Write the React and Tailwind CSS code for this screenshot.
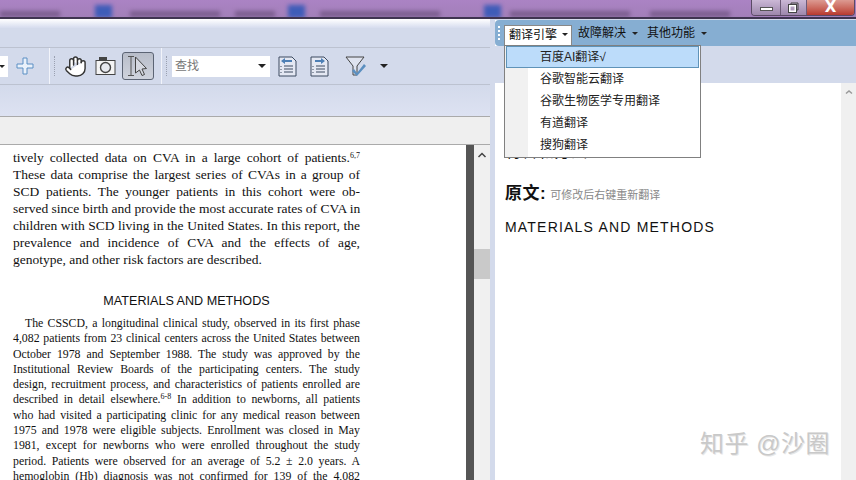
import React from 'react';
import { Hand } from 'lucide-react';

const cjk = "font-['Liberation_Sans','Noto_Sans_CJK_SC',sans-serif]";
const serif = "font-['Liberation_Serif','Times_New_Roman',serif]";

const introLines = [
  ['tively collected data on CVA in a large cohort of patients.', '6,7'],
  ['These data comprise the largest series of CVAs in a group of'],
  ['SCD patients. The younger patients in this cohort were ob-'],
  ['served since birth and provide the most accurate rates of CVA in'],
  ['children with SCD living in the United States. In this report, the'],
  ['prevalence and incidence of CVA and the effects of age,'],
];

const methodLines = [
  ['4,082 patients from 23 clinical centers across the United States between'],
  ['October 1978 and September 1988. The study was approved by the'],
  ['Institutional Review Boards of the participating centers. The study'],
  ['design, recruitment process, and characteristics of patients enrolled are'],
  ['described in detail elsewhere.', '6-8', ' In addition to newborns, all patients'],
  ['who had visited a participating clinic for any medical reason between'],
  ['1975 and 1978 were eligible subjects. Enrollment was closed in May'],
  ['1981, except for newborns who were enrolled throughout the study'],
  ['period. Patients were observed for an average of 5.2 ± 2.0 years. A'],
  ['hemoglobin (Hb) diagnosis was not confirmed for 139 of the 4,082'],
];

const engines = ['百度AI翻译√', '谷歌智能云翻译', '谷歌生物医学专用翻译', '有道翻译', '搜狗翻译'];

const titlePatches = [
  'left-[0px] w-[60px]', 'left-[130px] w-[90px]', 'left-[235px] w-[40px]',
  'left-[320px] w-[120px]', 'left-[510px] w-[120px]', 'left-[650px] w-[80px]',
];

const Caret = ({ className = '' }) => (
  <span className={`inline-block w-0 h-0 border-x-[3px] border-x-transparent border-t-[3px] border-t-[#222] ${className}`} />
);

const Gripper = () => (
  <div className="w-[2px] h-[20px] border-l border-dotted border-[#9aa0b0]" />
);

const CameraIcon = () => (
  <svg width="22" height="20" viewBox="0 0 22 20" fill="none">
    <rect x="4" y="1" width="8" height="4" fill="#444" />
    <rect x="1" y="4.500" width="19" height="14" fill="#f4f4f4" stroke="#444" />
    <circle cx="10.500" cy="11.500" r="5" fill="#e6e8ee" stroke="#444" strokeWidth="1.400" />
  </svg>
);

const SelectIcon = () => (
  <svg width="24" height="24" viewBox="0 0 24 24" fill="none">
    <path d="M2 2.500h6M2 21.500h6M5 2.500v19" stroke="#555" strokeWidth="1" />
    <path d="M9.500 3l11 11.500-4.500.5 2.500 5.500-2.500 1-2.500-5.500-4 3z" fill="#d5d8e0" stroke="#444" strokeWidth="1" />
  </svg>
);

const PlusIcon = () => (
  <svg width="18" height="18" viewBox="0 0 18 18" fill="#eaf1fa">
    <path d="M7 1h4v6h6v4h-6v6H7v-6H1V7h6z" stroke="#5b8fc4" strokeWidth="1" />
  </svg>
);

const PageIcon = ({ dir }) => (
  <svg width="19" height="21" viewBox="0 0 19 21" fill="none">
    <path d="M1 1h13l4 4v15H1z" fill="#e4e8f3" stroke="#3c4a60" />
    <path d="M6 10h9M6 13h9M6 16h9" stroke="#3c4a60" />
    <path d="M3 10v1M3 13v1M3 16v1" stroke="#3c4a60" />
    {dir === 'left'
      ? <path d="M3 5l4-3v2h7v2H7v2z" fill="#4d7fb5" />
      : <path d="M15 5l-4-3v2H5v2h6v2z" fill="#4d7fb5" />}
  </svg>
);

const FilterIcon = () => (
  <svg width="22" height="21" viewBox="0 0 22 21" fill="none">
    <path d="M1 1h18l-7 9v9h-4v-9z" fill="#dfe3ef" stroke="#444" />
    <path d="M9 13l3 4 7-9 2 2-9 10-5-5z" fill="#5b8fc0" />
  </svg>
);

const RestoreIcon = () => (
  <svg width="11" height="11" viewBox="0 0 11 11" fill="none">
    <path d="M3 3V1h7v7H8" stroke="#444" />
    <rect x="1.500" y="3.500" width="6" height="6" stroke="#fff" strokeWidth="2" />
    <rect x="0.500" y="2.500" width="8" height="8" stroke="#444" />
  </svg>
);

const WindowControls = () => (
  <div className="absolute top-0 right-[1px] flex h-[16px] w-[104px] rounded-b-[4px] border border-t-0 border-[#5b4a66] overflow-hidden">
    <div className="w-[29px] flex items-center justify-center bg-gradient-to-b from-[#cbb8d6] to-[#9d87ac] border-r border-[#6d5a78]">
      <div className="w-[13px] h-[4px] mt-[3px] bg-white border border-[#555]" />
    </div>
    <div className="w-[26px] flex items-center justify-center bg-gradient-to-b from-[#cbb8d6] to-[#9d87ac] border-r border-[#6d5a78]">
      <RestoreIcon />
    </div>
    <div className="flex-1 flex items-center justify-center bg-gradient-to-b from-[#dc9a92] to-[#b8382e]">
      <span className="text-white font-bold text-[15px] leading-none font-['DejaVu_Sans',sans-serif]">X</span>
    </div>
  </div>
);

const TitleBlur = () => (
  <div className="absolute inset-0 overflow-hidden">
    {titlePatches.map((patch) => (
      <div key={patch} className={`absolute bottom-0 h-[6px] bg-[#5f4670] opacity-60 blur-[2px] ${patch}`} />
    ))}
    <div className="absolute left-[95px] top-[5px] w-[17px] h-[13px] bg-[#3f5cb8] blur-[2px]" />
    <div className="absolute left-[288px] top-[5px] w-[17px] h-[13px] bg-[#3f5cb8] blur-[2px]" />
    <div className="absolute left-[484px] top-[5px] w-[17px] h-[13px] bg-[#3f5cb8] blur-[2px]" />
  </div>
);

const JustLine = ({ parts, last }) => (
  <div className={`whitespace-nowrap ${last ? '' : '[text-align:justify] [text-align-last:justify]'}`}>
    {parts.map((part, i) =>
      i % 2 === 1
        ? <sup key={i} className="text-[8px] align-baseline relative -top-[4px]">{part}</sup>
        : <span key={i}>{part}</span>
    )}
  </div>
);

const PdfPane = () => (
  <div className="w-[490px] flex flex-col h-[461px] bg-[#d3daeb]">
    <div className="h-[9px] bg-gradient-to-b from-white to-[#d6dcee]" />
    <div className="h-[20px] bg-[#d3daeb] border-b border-[#bcc2d0]" />
    <div className="h-[37px] flex items-center bg-[#d3daeb] border-b border-[#bcc2d0]">
      <div className="w-[8px] h-[21px] bg-white flex items-center">
        <Caret className="-ml-[1px]" />
      </div>
      <div className="ml-[8px]"><PlusIcon /></div>
      <div className="ml-[15px] w-[1px] h-[36px] bg-[#f2f4fa]" />
      <div className="ml-[4px]"><Gripper /></div>
      <div className="ml-[8px]">
        <Hand size={23} fill="#fff" color="#333" strokeWidth={1.5} />
      </div>
      <div className="ml-[8px]"><CameraIcon /></div>
      <div className="ml-[5px] w-[32px] h-[28px] flex items-center justify-center rounded-[3px] border border-[#5c6474] bg-gradient-to-b from-[#b8bdc9] to-[#cfd3dd]">
        <SelectIcon />
      </div>
      <div className="ml-[7px] w-[1px] h-[36px] bg-[#f2f4fa]" />
      <div className="ml-[4px]"><Gripper /></div>
      <div className="ml-[4px] w-[98px] h-[21px] bg-white flex items-center justify-between px-[3px]">
        <span className={`${cjk} text-[12px] text-[#777]`}>查找</span>
        <Caret className="border-x-[4px] border-t-[4px] mr-[1px]" />
      </div>
      <div className="ml-[8px]"><PageIcon dir="left" /></div>
      <div className="ml-[13px]"><PageIcon dir="right" /></div>
      <div className="ml-[16px]"><FilterIcon /></div>
      <Caret className="ml-[13px] border-x-[4px] border-t-[4px]" />
    </div>
    <div className="h-[32px] bg-gradient-to-b from-[#d3daeb] to-[#dde2f2] border-b border-[#aaaaaa]" />
    <div className="h-[28px] bg-[#efefef] border-b border-[#aaaaaa]" />
    <div className="flex-1 flex overflow-hidden bg-white">
      <div className={`w-[466px] ${serif} text-[#111] pl-[13px] pt-[4px]`}>
        <div className="w-[347px] text-[13.500px] leading-[17px]">
          {introLines.map((parts, i) => <JustLine key={i} parts={parts} />)}
          <JustLine parts={['genotype, and other risk factors are described.']} last />
        </div>
        <div className="w-[347px] mt-[25px] text-center text-[12.600px] leading-[16px] font-['Liberation_Sans',sans-serif]">
          MATERIALS AND METHODS
        </div>
        <div className="w-[347px] mt-[7px] text-[11.800px] leading-[15.300px]">
          <div className="pl-[12px]">
            <JustLine parts={['The CSSCD, a longitudinal clinical study, observed in its first phase']} />
          </div>
          {methodLines.map((parts, i) => <JustLine key={i} parts={parts} />)}
        </div>
      </div>
      <div className="w-[8px] bg-[#555555]" />
      <div className="w-[16px] bg-[#f0f0f0] flex flex-col items-center">
        <svg width="10" height="8" viewBox="0 0 10 8" className="mt-[6px]" fill="none">
          <path d="M1.500 6L5 2.500 8.500 6" stroke="#444" strokeWidth="1.500" />
        </svg>
        <div className="mt-[90px] w-full h-[30px] bg-[#c9c9c9]" />
      </div>
    </div>
  </div>
);

const TranslatePane = () => (
  <div className="relative flex-1 h-[461px] flex flex-col">
    <div className="h-[1px] bg-[#d3daeb]" />
    <div className={`h-[26px] flex items-center bg-[#86aed2] rounded-tl-[4px] rounded-bl-[4px] ${cjk} text-[12px] text-[#111]`}>
      <div className="ml-[3px] flex flex-col gap-[2px]">
        <span className="w-[2px] h-[2px] bg-white" />
        <span className="w-[2px] h-[2px] bg-white" />
        <span className="w-[2px] h-[2px] bg-white" />
        <span className="w-[2px] h-[2px] bg-white" />
      </div>
      <div className="ml-[4px] w-[68px] h-[21px] mt-[5px] pb-[3px] flex items-center bg-white border border-b-0 border-[#888] pl-[4px]">
        <span>翻译引擎</span>
        <Caret className="ml-[5px]" />
      </div>
      <span className="ml-[6px]">故障解决</span>
      <Caret className="ml-[6px]" />
      <span className="ml-[9px]">其他功能</span>
      <Caret className="ml-[6px]" />
    </div>
    <div className="h-[37px] bg-[#d3daeb]" />
    <div className="flex-1 flex overflow-hidden">
      <div className={`flex-1 bg-white pl-[10px] pt-[59px] ${cjk} text-[#111]`}>
        <div className="text-[16px] leading-[20px] tracking-[0.5px]">材料和方法</div>
        <div className="mt-[22px] flex items-baseline">
          <span className="text-[17px] font-bold leading-[20px] tracking-[0.5px]">原文:</span>
          <span className="ml-[4px] text-[11px] text-[#888]">可修改后右键重新翻译</span>
        </div>
        <div className="mt-[14px] text-[14px] leading-[18px] tracking-[1.200px]">MATERIALS AND METHODS</div>
      </div>
      <div className="w-[15px] bg-[#f0f0f0] flex flex-col items-center">
        <svg width="10" height="8" viewBox="0 0 10 8" className="mt-[5px]" fill="none">
          <path d="M2 5.500L5 3l3 2.500" stroke="#999" strokeWidth="1.500" />
        </svg>
      </div>
    </div>
    {/* engine dropdown */}
    <div className={`absolute left-[9px] top-[26px] w-[197px] h-[113px] border border-[#808080] pl-[1px] ${cjk} text-[12px] text-[#222] bg-gradient-to-r from-[#f1f1f1] from-[12%] to-white to-[12%]`}>
      {engines.map((label, i) => (
        <div
          key={label}
          className={`w-[193px] h-[22px] flex items-center pl-[33px] border ${i === 0 ? 'bg-[#bcdcfa] border-[#5f93b8]' : 'border-transparent'}`}
        >
          {label}
        </div>
      ))}
    </div>
    <div className={`absolute left-[205px] top-[411px] text-[24px] leading-[28px] tracking-[0.5px] text-[#c9c9c9] ${cjk} whitespace-nowrap [text-shadow:1px_1px_0_#e8e8e8]`}>
      知乎 @沙圈
    </div>
  </div>
);

const App = () => (
  <div className="relative w-[856px] h-[480px] overflow-hidden bg-white">
    <div className="relative h-[19px] bg-gradient-to-b from-[#ab83c4] to-[#a27fb9] border-b-2 border-[#3f3450]">
      <TitleBlur />
      <WindowControls />
    </div>
    <div className="flex">
      <PdfPane />
      <div className="w-[5px] h-[461px] bg-[#d3daeb]" />
      <TranslatePane />
    </div>
  </div>
);

export default App;
